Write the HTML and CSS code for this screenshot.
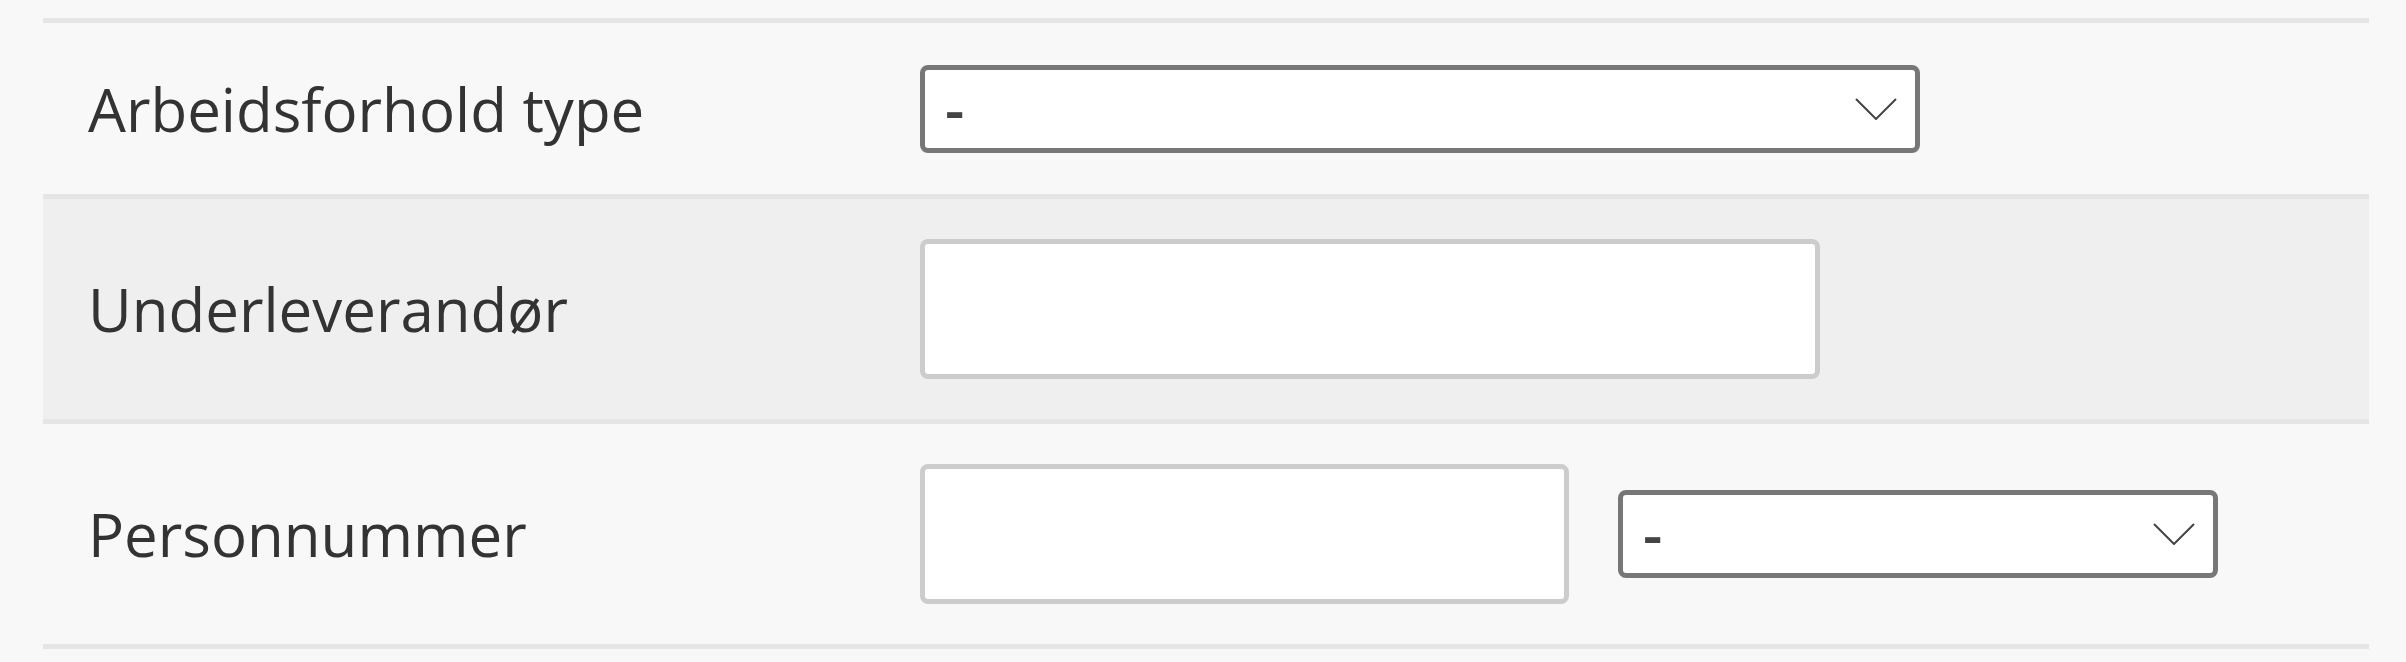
FILE: index.html
```html
<!DOCTYPE html>
<html lang="no">
<head>
<meta charset="utf-8">
<title>Skjema</title>
<link rel="stylesheet" href="styles.css">
</head>
<body>
<div class="form">
  <div class="row row-first">
    <div class="label">Arbeidsforhold type</div>
    <div class="fields">
      <div class="select select-wide">
        <span class="select-value">-</span>
        <svg class="chevron" viewBox="0 0 42 22" width="42" height="22"><path d="M1 1 L21 21 L41 1" fill="none" stroke="#444" stroke-width="2"/></svg>
      </div>
    </div>
  </div>
  <div class="row row-alt">
    <div class="label">Underleverandør</div>
    <div class="fields">
      <input class="text-input input-wide" type="text">
    </div>
  </div>
  <div class="row row-last">
    <div class="label">Personnummer</div>
    <div class="fields">
      <input class="text-input input-mid" type="text">
      <div class="select select-narrow">
        <span class="select-value">-</span>
        <svg class="chevron" viewBox="0 0 42 22" width="42" height="22"><path d="M1 1 L21 21 L41 1" fill="none" stroke="#444" stroke-width="2"/></svg>
      </div>
    </div>
  </div>
</div>
</body>
</html>
```
FILE: styles.css
```css
html, body {
  margin: 0;
  padding: 0;
  background: #f8f8f8;
}

body {
  padding: 18px 37px 0 43px;
  font-family: "Open Sans", "Liberation Sans", sans-serif;
  color: #333;
}

.form {
  display: flex;
  flex-direction: column;
}

.row {
  display: grid;
  grid-template-columns: 877px 1fr;
  align-items: center;
  border-top: 5px solid #e5e5e5;
  padding: 40px 0;
  background: #f8f8f8;
}

.row-first {
  padding: 42px 0 41px;
}

.row-alt {
  background: #efefef;
}

.row-last {
  border-bottom: 5px solid #e5e5e5;
}

.label {
  padding-left: 45px;
  font-size: 60px;
  line-height: 1;
  color: #333;
}

.fields {
  display: flex;
  align-items: center;
  gap: 49px;
}

.select {
  box-sizing: border-box;
  height: 88px;
  border: 5px solid #777;
  border-radius: 8px;
  background: #fff;
  display: flex;
  align-items: center;
  justify-content: space-between;
  padding: 0 18px 0 20px;
}

.select-wide {
  width: 1000px;
}

.select-narrow {
  width: 600px;
}

.select-value {
  font-size: 60px;
  font-weight: 600;
  line-height: 1;
  color: #444;
  position: relative;
  top: -1px;
}

.chevron {
  display: block;
}

.text-input {
  box-sizing: border-box;
  height: 140px;
  border: 5px solid #ccc;
  border-radius: 8px;
  background: #fff;
  margin: 0;
  padding: 0 20px;
  font-family: inherit;
  font-size: 40px;
  outline: none;
}

.input-wide {
  width: 900px;
}

.input-mid {
  width: 649px;
}
```
